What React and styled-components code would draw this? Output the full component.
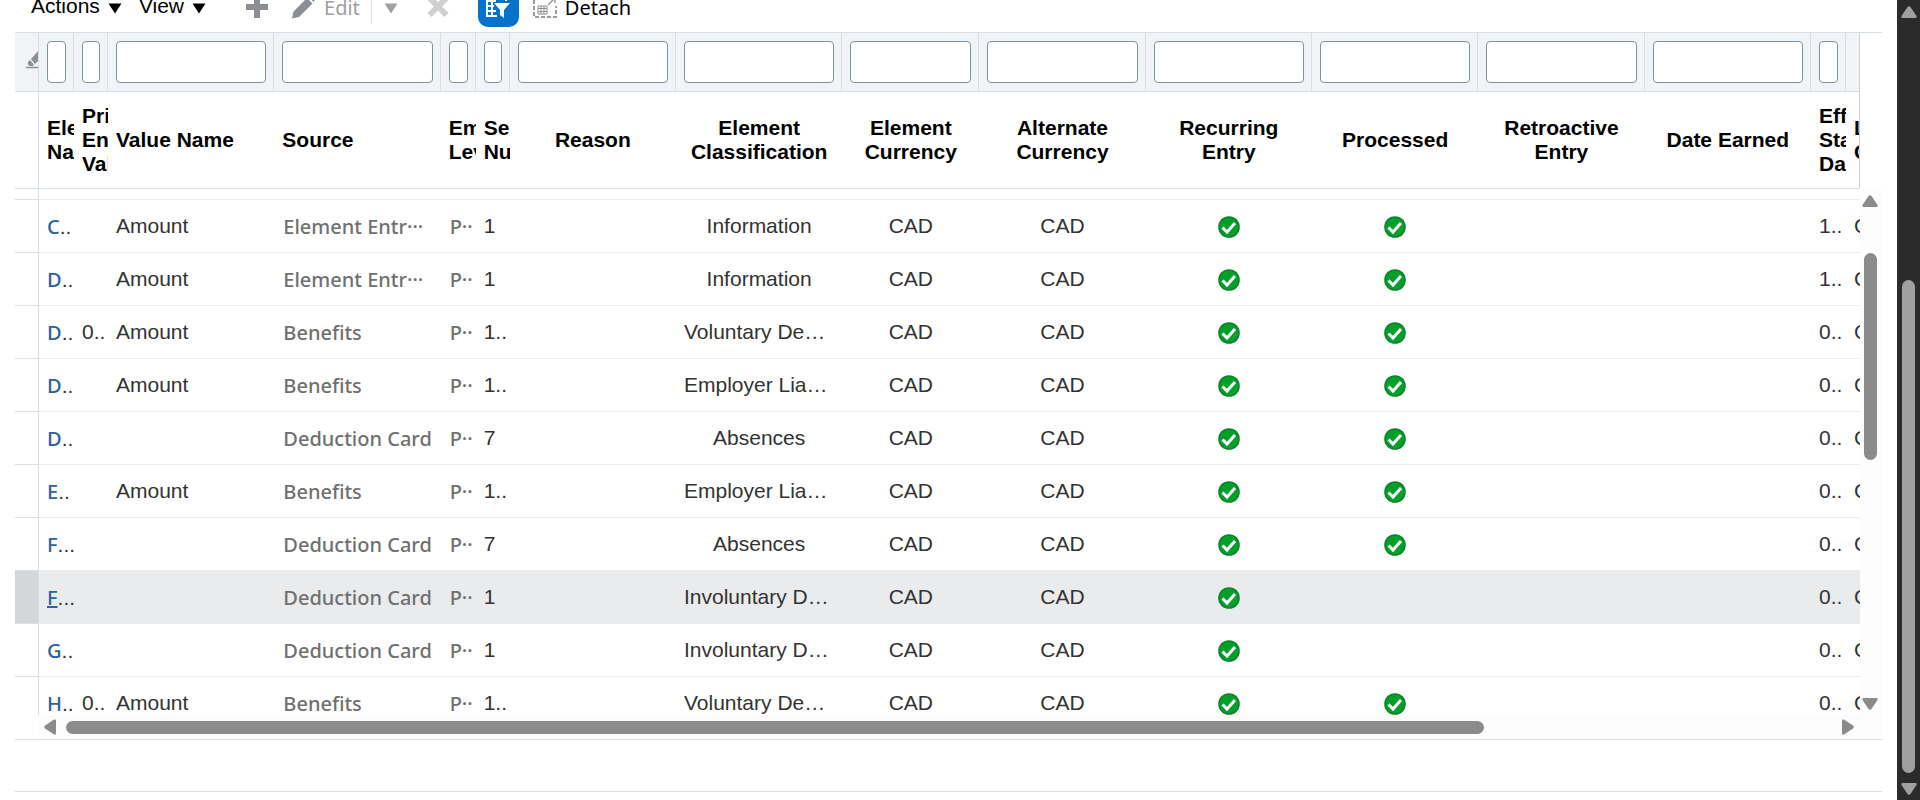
import React from "react";
import styled, { createGlobalStyle, css } from "styled-components";

const sans = '"Liberation Sans", Arial, sans-serif';
const humanist = '"Noto Sans", "Open Sans", sans-serif';
const line = "#d6dfe6";

const Global = createGlobalStyle`
  *, *::before, *::after { box-sizing: border-box; }
  body { margin: 0; background: #fff; font-family: ${sans}; font-size: 21px; color: #333; }
  button { font: inherit; color: inherit; background: none; border: 0; padding: 0; margin: 0; cursor: pointer; }
`;

const Page = styled.div`
  display: flex;
  height: 100vh;
  overflow: hidden;
`;

const Main = styled.main`
  flex: 1;
  min-width: 0;
  padding: 0 15px;
`;

const Toolbar = styled.div`
  display: flex;
  align-items: flex-end;
  height: 32px;
  padding: 0 0 5px 16px;
`;

const MenuButton = styled.button`
  display: flex;
  align-items: center;
  gap: 8px;
  height: 42px;
  margin-right: 17px;
  color: #000;
  line-height: 24px;
  svg { margin-top: 4px; }
`;

const ToolButton = styled.button`
  display: flex;
  align-items: center;
  gap: 8px;
  height: 38px;
  margin-left: ${(p) => p.$before || 0}px;
  font-family: ${humanist};
  font-size: 20px;
  line-height: 24px;
  color: ${(p) => (p.disabled ? "#a0a0a0" : "#000")};
`;

const FilterToggle = styled.button`
  display: flex;
  align-items: center;
  justify-content: center;
  width: 41px;
  height: 42px;
  margin: 0 14px 0 29px;
  border-radius: 10px;
  background: #0572ce;
`;

const Divider = styled.span`
  width: 1px;
  height: 34px;
  margin: 0 0 3px 11px;
  background: #dcdcdc;
`;

const Panel = styled.section`
  display: grid;
  grid-template-columns: minmax(0, 1fr) 22px;
  border-top: 1px solid ${line};
  border-bottom: 1px solid ${line};
`;

const Sheet = styled.table`
  width: 100%;
  table-layout: fixed;
  border-collapse: separate;
  border-spacing: 0;
`;

const FilterCell = styled.td`
  height: 59px;
  padding: 0 7px 0 8px;
  overflow: hidden;
  background: #f1f3f7;
  border-right: 1px solid ${line};
  border-bottom: 1px solid ${line};
  &:last-child { border-right-color: #c9cfd4; }
`;

const EraseCell = styled(FilterCell)`
  padding: 0 0 0 11px;
`;

const FilterInput = styled.input`
  display: block;
  width: 100%;
  height: 42px;
  padding: 0;
  background: #fff;
  border: 1px solid #7c93a1;
  border-radius: 4px;
  font: inherit;
`;

const HeadCell = styled.th`
  height: 97px;
  padding: 0 0 0 8px;
  overflow: hidden;
  border-bottom: 1px solid ${line};
  color: #000;
  font-weight: bold;
  line-height: 24px;
  text-align: left;
  ${(p) => p.$center && css`padding: 0 8px; text-align: center;`}
  &:last-child { border-right: 1px solid #c9cfd4; }
`;

const RowHandle = styled.td`
  border-right: 1px solid ${line};
  border-bottom: 1px solid ${line};
`;

const Row = styled.tr`
  height: ${(p) => (p.$cut ? 38 : 53)}px;
  ${(p) => p.$selected && css`
    background: #eaebed;
    ${RowHandle} { background: #d5d6d8; }
  `}
  ${(p) => p.$cut && css`
    & > td { border-bottom: 0; }
  `}
`;

const LeadRow = styled.tr`
  height: 11px;
`;

const Cell = styled.td`
  padding: 0 ${(p) => (p.$tight ? 0 : 8)}px 0 8px;
  overflow: hidden;
  vertical-align: top;
  border-bottom: 1px solid #ececee;
  text-align: ${(p) => (p.$center ? "center" : "left")};
`;

const Text = styled.span`
  display: block;
  height: 38px;
  padding-top: 14px;
  line-height: 24px;
  white-space: nowrap;
  overflow: hidden;
`;

const TruncatedText = styled(Text)`
  text-align: left;
`;

const NameText = styled(Text)`
  padding-top: 15px;
`;

const MutedText = styled(Text)`
  padding: 15px 0 0 1px;
  font-family: ${humanist};
  font-size: 20px;
  font-weight: 500;
  color: #707070;
`;

const NameLink = styled.a`
  font-family: ${humanist};
  font-size: 20px;
  font-weight: 500;
  color: #2b629f;
  text-decoration: ${(p) => (p.$active ? "underline" : "none")};
`;

const IconSlot = styled.span`
  display: flex;
  justify-content: center;
  padding-top: 16px;
`;

const VScroll = styled.div`
  display: flex;
  flex-direction: column;
  align-items: center;
  padding: 6px 5px 5px 3px;
  background: #fcfcfc;
`;

const HScroll = styled.div`
  grid-column: 1 / -1;
  display: flex;
  align-items: center;
  height: 24px;
  margin-left: 24px;
  padding: 0 28px 0 5px;
  background: #fcfcfc;
`;

const PageScroll = styled.div`
  display: flex;
  flex-direction: column;
  align-items: center;
  width: 23px;
  padding: 6px 4px 5px;
  background: #2b2b2b;
`;

const ScrollButton = styled.button`
  display: flex;
  flex: none;
`;

const Track = styled.div`
  flex: 1;
  display: flex;
  flex-direction: ${(p) => (p.$across ? "row" : "column")};
  margin: ${(p) => (p.$across ? "0 10px" : "10px 0")};
`;

const Thumb = styled.div`
  flex: ${(p) => p.$size} 0 0;
  min-width: 13px;
  min-height: 13px;
  border-radius: 7px;
  background: ${(p) => p.$color || "#8b8b8b"};
`;

const Rest = styled.div`
  flex: ${(p) => p.$size} 0 0;
`;

const Footer = styled.footer`
  height: 52px;
  border-bottom: 1px solid ${line};
`;

function MenuArrow({ color = "#000" }) {
  return (
    <svg width="14" height="11" viewBox="0 0 14 11" aria-hidden="true">
      <path d="M0.5 0.5h13L7 10.5z" fill={color} />
    </svg>
  );
}

const turns = { up: 0, right: 90, down: 180, left: 270 };

function ScrollArrow({ dir, color = "#8b8b8b" }) {
  const across = dir === "left" || dir === "right";
  return (
    <ScrollButton type="button" aria-label={`Scroll ${dir}`}>
      <svg width={across ? 12 : 16} height={across ? 16 : 12} viewBox={across ? "-6 -8 12 16" : "-8 -6 16 12"}>
        <path
          d="M-1.500 -5Q0 -6.500 1.500 -5L7.500 4Q8 6 6.500 6H-6.500Q-8 6 -7.500 4Z"
          fill={color}
          transform={`rotate(${turns[dir]})`}
        />
      </svg>
    </ScrollButton>
  );
}

function PlusIcon() {
  return (
    <svg width="22" height="22" viewBox="0 0 22 22" aria-hidden="true">
      <path d="M8 0h6v7h8v6h-8v8H8v-8H0V7h8z" fill="#8b8f93" />
    </svg>
  );
}

function PencilIcon() {
  return (
    <svg width="24" height="24" viewBox="0 0 24 24" aria-hidden="true">
      <path d="M0 22.500l1.500-7L15 2l5.500 5.500L7 21zM16.500 1L18-.5q1-.5 2 .5l2.500 2.500q1 1 0 2L21.500 6z" fill="#8b8f93" />
    </svg>
  );
}

function CrossIcon() {
  return (
    <svg width="22" height="22" viewBox="0 0 22 22" aria-hidden="true">
      <path d="M2.500 1l17 17M19.500 1l-17 17" stroke="#d0d0d0" strokeWidth="6" />
    </svg>
  );
}

function FilterIcon() {
  return (
    <svg width="26" height="26" viewBox="0 0 26 26" aria-hidden="true">
      <path d="M2 1v22h10M2 3h19v5M2 8h9M2 13h7M2 18h9M7 3v20" stroke="#fff" strokeWidth="2" fill="none" />
      <path d="M9 10h16l-6 7v8l-4-3v-5z" fill="#fff" />
    </svg>
  );
}

function DetachIcon() {
  return (
    <svg width="24" height="24" viewBox="0 0 24 24" aria-hidden="true">
      <path d="M1 4v17h22V10M1 3h10" stroke="#9a9da0" strokeWidth="2" strokeDasharray="4 2" fill="none" />
      <path d="M5 10h9v8H5zM5 12.500h9M5 15.500h9M8 10v8M11 10v8" stroke="#8b8f93" fill="none" />
      <path d="M15 9l7-7M17 2h5v5" stroke="#9a9da0" strokeWidth="1.500" fill="none" />
    </svg>
  );
}

const EraserSvg = styled.svg`
  display: block;
`;

function EraserIcon() {
  return (
    <EraserSvg width="12" height="19" viewBox="0 0 12 19" aria-hidden="true">
      <path d="M5 9l8-9v10l-4 4z" fill="#8b8f93" />
      <path d="M4 10l4 5q-2 2-5 .5-3-2.500 1-5.500z" fill="#8b8f93" />
      <path d="M0 17.500h12" stroke="#8b8f93" strokeWidth="1.500" />
    </EraserSvg>
  );
}

function CheckIcon() {
  return (
    <svg width="22" height="22" viewBox="0 0 22 22" role="img" aria-label="Yes">
      <circle cx="11" cy="11" r="10.800" fill="#0a8428" />
      <circle cx="11" cy="11" r="9.300" fill="#02a02b" />
      <path d="M4.500 11.500l4.500 4.500 8-9" stroke="#fff" strokeWidth="3" fill="none" />
    </svg>
  );
}

const columns = [
  { key: "name", lines: ["Ele", "Na"], width: 35, tight: true },
  { key: "primary", lines: ["Pri", "En", "Val"], width: 34, tight: true },
  { key: "value", lines: ["Value Name"] },
  { key: "source", lines: ["Source"] },
  { key: "level", lines: ["Em", "Lev"], width: 35, tight: true },
  { key: "seq", lines: ["Se", "Nu"], width: 34, tight: true },
  { key: "reason", lines: ["Reason"], center: true },
  { key: "classification", lines: ["Element", "Classification"], center: true },
  { key: "currency", lines: ["Element", "Currency"], width: 137, center: true },
  { key: "alternate", lines: ["Alternate", "Currency"], center: true },
  { key: "recurring", lines: ["Recurring", "Entry"], center: true },
  { key: "processed", lines: ["Processed"], center: true },
  { key: "retroactive", lines: ["Retroactive", "Entry"], center: true },
  { key: "earned", lines: ["Date Earned"], center: true },
  { key: "start", lines: ["Eff", "Sta", "Da"], width: 35, tight: true },
  { key: "last", lines: ["L", "C"], width: 14, tight: true },
];

const toRow = ([name, primary, value, source, seq, classification, processed, start]) => ({
  name, primary, value, source, seq, classification, start,
  level: "P··", currency: "CAD", alternate: "CAD", recurring: true, processed, last: "C",
});

const rows = [
  ["C", "", "Amount", "Element Entr···", "1", "Information", true, "1.."],
  ["D", "", "Amount", "Element Entr···", "1", "Information", true, "1.."],
  ["D", "0..", "Amount", "Benefits", "1..", "Voluntary De…", true, "0.."],
  ["D", "", "Amount", "Benefits", "1..", "Employer Lia…", true, "0.."],
  ["D", "", "", "Deduction Card", "7", "Absences", true, "0.."],
  ["E", "", "Amount", "Benefits", "1..", "Employer Lia…", true, "0.."],
  ["F", "", "", "Deduction Card", "7", "Absences", true, "0.."],
  ["F", "", "", "Deduction Card", "1", "Involuntary D…", false, "0.."],
  ["G", "", "", "Deduction Card", "1", "Involuntary D…", false, "0.."],
  ["H", "0..", "Amount", "Benefits", "1..", "Voluntary De…", true, "0.."],
].map(toRow);

const selectedIndex = 7;

const Col = styled.col`
  width: ${(p) => (p.$width ? `${p.$width}px` : "auto")};
`;

function Columns() {
  return (
    <colgroup>
      <Col $width={24} />
      {columns.map((c) => <Col key={c.key} $width={c.width} />)}
    </colgroup>
  );
}

function CellContent({ column, row, active }) {
  const value = row[column.key];
  if (value === true) return <IconSlot><CheckIcon /></IconSlot>;
  if (!value) return null;
  if (column.key === "name") {
    return (
      <NameText>
        <NameLink href="#" $active={active}>{value}</NameLink>
        {value === "F" ? "..." : ".."}
      </NameText>
    );
  }
  if (column.key === "source" || column.key === "level") return <MutedText>{value}</MutedText>;
  if (value.endsWith("…")) return <TruncatedText>{value}</TruncatedText>;
  return <Text>{value}</Text>;
}

export default function App() {
  return (
    <Page>
      <Global />
      <Main>
        <Toolbar role="toolbar">
          <MenuButton type="button">Actions <MenuArrow /></MenuButton>
          <MenuButton type="button">View <MenuArrow /></MenuButton>
          <ToolButton type="button" aria-label="Add" disabled $before={23}><PlusIcon /></ToolButton>
          <ToolButton type="button" disabled $before={24}><PencilIcon />Edit</ToolButton>
          <Divider />
          <ToolButton type="button" aria-label="Edit options" disabled $before={12}><MenuArrow color="#a0a0a0" /></ToolButton>
          <ToolButton type="button" aria-label="Delete" disabled $before={29}><CrossIcon /></ToolButton>
          <FilterToggle type="button" aria-label="Query by example"><FilterIcon /></FilterToggle>
          <ToolButton type="button"><DetachIcon />Detach</ToolButton>
        </Toolbar>
        <Panel>
          <Sheet>
            <Columns />
            <thead>
              <tr>
                <EraseCell><button type="button" aria-label="Clear filters"><EraserIcon /></button></EraseCell>
                {columns.map((c) => (
                  <FilterCell key={c.key}>
                    {c.key !== "last" && <FilterInput type="text" aria-label={`Filter ${c.lines.join(" ")}`} />}
                  </FilterCell>
                ))}
              </tr>
              <tr>
                <RowHandle />
                {columns.map((c) => (
                  <HeadCell key={c.key} scope="col" $center={c.center}>
                    {c.lines.map((text) => <div key={text}>{text}</div>)}
                  </HeadCell>
                ))}
              </tr>
            </thead>
          </Sheet>
          <div />
          <Sheet>
            <Columns />
            <tbody>
              <LeadRow>
                <RowHandle />
                {columns.map((c) => <Cell key={c.key} $tight />)}
              </LeadRow>
              {rows.map((row, i) => (
                <Row key={i} $selected={i === selectedIndex} $cut={i === rows.length - 1}>
                  <RowHandle />
                  {columns.map((c) => (
                    <Cell key={c.key} $center={c.center} $tight={c.tight}>
                      <CellContent column={c} row={row} active={i === selectedIndex} />
                    </Cell>
                  ))}
                </Row>
              ))}
            </tbody>
          </Sheet>
          <VScroll>
            <ScrollArrow dir="up" />
            <Track>
              <Rest $size={36} />
              <Thumb $size={208} />
              <Rest $size={228} />
            </Track>
            <ScrollArrow dir="down" />
          </VScroll>
          <HScroll>
            <ScrollArrow dir="left" />
            <Track $across>
              <Thumb $size={1417} />
              <Rest $size={348} />
            </Track>
            <ScrollArrow dir="right" />
          </HScroll>
        </Panel>
        <Footer />
      </Main>
      <PageScroll>
        <ScrollArrow dir="up" color="#a0a0a0" />
        <Track>
          <Rest $size={252} />
          <Thumb $size={492} $color="#a0a0a0" />
        </Track>
        <ScrollArrow dir="down" color="#a0a0a0" />
      </PageScroll>
    </Page>
  );
}
